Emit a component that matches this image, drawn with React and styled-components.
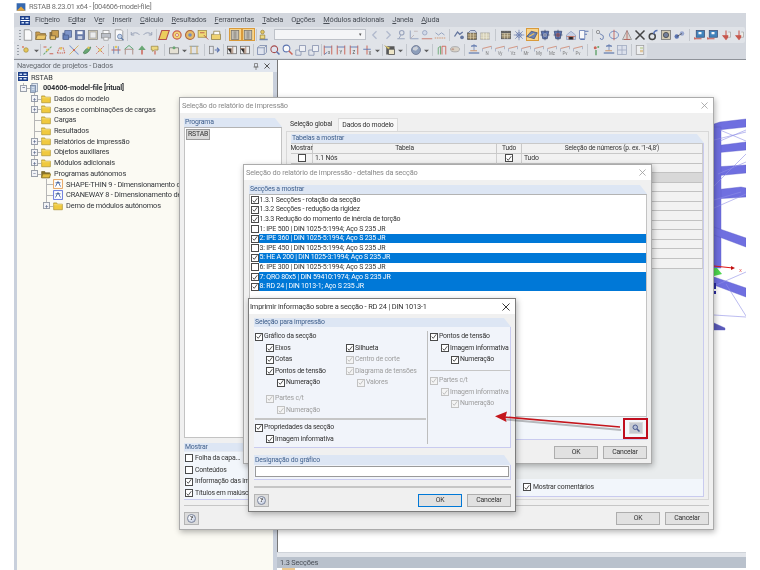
import React from "react";
import styled, { createGlobalStyle, css } from "styled-components";

const Global = createGlobalStyle`
  html, body { margin: 0; padding: 0; background: #fff; }
  #root { width: 760px; height: 570px; overflow: hidden; }
  * { box-sizing: border-box; }
`;

const small = css`
  font-size: 6.9px;
  letter-spacing: -0.18px;
`;

const Screen = styled.div`
  position: relative;
  width: 760px;
  height: 570px;
  overflow: hidden;
  background: #fff;
  font: 7.4px/1 Roboto, "Liberation Sans", sans-serif;
  letter-spacing: -0.18px;
  color: #333;
  filter: blur(0.35px);
`;
const AppTitle = styled.div`
  height: 13px;
  padding-left: 16px;
  display: flex;
  align-items: center;
  gap: 3px;
  color: #707070;
  letter-spacing: -0.25px;
`;
const Frame = styled.div`
  margin: 0 14px 0 14px;
  height: 557px;
  display: flex;
  flex-direction: column;
`;
const Chrome = styled.div`
  height: 47px;
  background: #d3d7de;
  border-bottom: 1px solid #8e9299;
  flex: none;
`;
const MenuBar = styled.div`
  height: 14px;
  padding-left: 6px;
  display: flex;
  align-items: center;
  gap: 8.1px;
  color: #4a4f57;
`;
const MenuLogo = styled.span`
  display: flex;
  margin-right: -3px;
`;
const ToolRow = styled.div`
  height: 15.5px;
  width: ${(p) => p.$w}px;
  padding-left: ${(p) => p.$pad}px;
  display: flex;
  align-items: center;
  background: #e0e3e8;
  border-radius: 2px;
  &::before {
    content: "";
    width: 2px;
    height: 10px;
    flex: none;
    margin-left: -3px;
    margin-right: 1px;
    background: repeating-linear-gradient(#9aa0a8 0 1px, transparent 1px 3px);
  }
`;
const Tool = styled.span`
  width: ${(p) => (p.$caret ? 7 : 13)}px;
  height: 13px;
  flex: none;
  display: flex;
  align-items: center;
  justify-content: center;
  svg {
    opacity: 0.82;
  }
  ${(p) =>
    p.$on &&
    css`
      background: #f8d48a;
      box-shadow: inset 0 0 0 1px #d99a3a;
    `}
`;
const Sep = styled.span`
  width: ${(p) => p.$w}px;
  height: 12px;
  flex: none;
  background: linear-gradient(#c3c7cd, #c3c7cd) center / 1px 100% no-repeat;
`;
const Combo = styled.span`
  width: ${(p) => p.$w}px;
  height: 11px;
  flex: none;
  margin: 0 3px 0 3px;
  background: #f4f5f7;
  border: 1px solid #bdc1c8;
  display: flex;
  align-items: center;
  justify-content: flex-end;
  padding-right: 3px;
  font-size: 5px;
  color: #555;
`;
const Main = styled.div`
  flex: 1;
  min-height: 0;
  display: flex;
`;
const Navigator = styled.div`
  width: 263px;
  flex: none;
  display: flex;
  flex-direction: column;
  background: #c9d0dc;
  padding: 0 4px 0 3px;
`;
const NavHead = styled.div`
  height: 12px;
  margin-left: -3px;
  margin-right: -4px;
  padding: 0 7px 0 3px;
  background: #e1e6ee;
  display: flex;
  align-items: center;
  justify-content: space-between;
  color: #666a70;
`;
const NavBtns = styled.span`
  display: flex;
  align-items: center;
  gap: 5px;
`;
const Tree = styled.div`
  flex: 1;
  background: #fbfaf3;
`;
const Node = styled.div`
  height: 10.7px;
  padding-left: ${(p) => p.$in}px;
  display: flex;
  align-items: center;
  font-weight: ${(p) => (p.$bold ? 700 : 400)};
  color: #33363b;
  white-space: nowrap;
  overflow: hidden;
`;
const Twig = styled.span`
  position: relative;
  width: 9px;
  height: 100%;
  flex: none;
  display: flex;
  align-items: center;
  justify-content: center;
  &::before {
    content: "";
    position: absolute;
    left: 4px;
    top: 0;
    bottom: ${(p) => (p.$last ? "50%" : 0)};
    border-left: 1px solid #b6b6b6;
  }
  &::after {
    content: "";
    position: absolute;
    left: 4px;
    right: -2px;
    top: 50%;
    border-top: 1px solid #b6b6b6;
  }
`;
const Expander = styled.span`
  position: relative;
  z-index: 1;
  width: 7px;
  height: 7px;
  border: 1px solid #9aa0aa;
  background: #f2f3f6;
  display: flex;
  align-items: center;
  justify-content: center;
  font-size: 6px;
  line-height: 1;
  color: #4a5a80;
`;
const NodeIcon = styled.span`
  width: 10px;
  height: 10px;
  flex: none;
  display: flex;
  margin: 0 3px 0 ${(p) => p.$l ?? 0}px;
`;
const Work = styled.div`
  flex: 1;
  min-width: 0;
  display: flex;
  flex-direction: column;
`;
const Canvas = styled.div`
  flex: 1;
  min-height: 0;
  background: #fff;
  border-left: 1px solid #777;
  svg {
    display: block;
    width: 100%;
    height: 100%;
  }
`;
const Gutter = styled.div`
  height: 5px;
  flex: none;
  background: #e2e5ea;
  border-top: 1px solid #d0d4da;
`;
const SectionBar = styled.div`
  height: 11px;
  flex: none;
  padding-left: 3px;
  background: #b9c1cc;
  display: flex;
  align-items: center;
  color: #4a4f57;
`;
const BarEdge = styled.div`
  height: 2px;
  flex: none;
  padding-left: 5px;
  display: flex;
`;
const TabStub = styled.span`
  width: 13px;
  background: #edc98f;
`;

/* dialogs: windows on the desktop */
const Dialog = styled.div`
  position: absolute;
  left: ${(p) => p.$x}px;
  top: ${(p) => p.$y}px;
  width: ${(p) => p.$w}px;
  height: ${(p) => p.$h}px;
  background: #f0f0f0;
  border: 1px solid ${(p) => (p.$focus ? "#7c7c7c" : "#ababab")};
  box-shadow: 1px 2px 6px rgba(0, 0, 0, 0.3);
  display: flex;
  flex-direction: column;
`;
const DlgTitle = styled.div`
  height: 15px;
  flex: none;
  background: #fff;
  padding: 0 5px 0 ${(p) => (p.$focus ? 1 : 2)}px;
  display: flex;
  align-items: center;
  justify-content: space-between;
  color: ${(p) => (p.$focus ? "#333" : "#8a8a8a")};
`;
const CloseX = styled.span`
  display: flex;
  color: ${(p) => (p.$focus ? "#222" : "#9a9a9a")};
`;
const DlgBody = styled.div`
  flex: 1;
  min-height: 0;
  padding: ${(p) => p.$pad};
  display: flex;
  flex-direction: column;
`;
const Split = styled.div`
  flex: 1;
  min-height: 0;
  display: flex;
  gap: 4px;
`;
const Side = styled.div`
  width: 98px;
  flex: none;
  display: flex;
  flex-direction: column;
`;
const GroupHead = styled.div`
  ${small}
  height: ${(p) => p.$h || 9}px;
  flex: none;
  background: #dde6f4;
  clip-path: polygon(0 0, calc(100% - 7px) 0, 100% 100%, 0 100%);
  padding-left: 1px;
  display: flex;
  align-items: center;
  color: #3f5f8c;
`;
const WhiteList = styled.div`
  flex: 1;
  min-height: 0;
  background: #fff;
  border: 1px solid #c3c3c3;
  border-top-color: #b3b3b3;
  padding: ${(p) => p.$pad || 0};
`;
const ProgItem = styled.span`
  ${small}
  display: inline-block;
  padding: 1px;
  background: #d9d9d9;
  border: 1px solid #9a9a9a;
`;
const Options = styled.div`
  ${small}
  height: 48px;
  flex: none;
  background: #f2f6fb;
  border-bottom: 1px solid #c9cbef;
  padding-top: 1px;
`;
const OptionRow = styled.div`
  height: 11.7px;
  padding-left: 1px;
  display: flex;
  align-items: center;
  gap: 2px;
  white-space: nowrap;
`;
const SideGap = styled.div`
  height: ${(p) => p.$h || 5}px;
  flex: none;
`;
const Right = styled.div`
  flex: 1;
  min-width: 0;
  display: flex;
  flex-direction: column;
`;
const Tabs = styled.div`
  ${small}
  height: 13px;
  flex: none;
  display: flex;
  padding-left: 2px;
`;
const Tab = styled.span`
  padding: 0 ${(p) => (p.$on ? 3 : 2)}px;
  height: 13px;
  display: flex;
  align-items: center;
  background: ${(p) => (p.$on ? "#f8f8f8" : "transparent")};
  border: ${(p) => (p.$on ? "1px solid #dcdcdc" : "none")};
  border-bottom: none;
  margin-left: ${(p) => (p.$on ? 4 : 0)}px;
`;
const Pane = styled.div`
  flex: 1;
  min-height: 0;
  border: 1px solid #d8d8d8;
  padding: 2px 4px 2px 4px;
  display: flex;
  flex-direction: column;
`;
const TableArea = styled.div`
  flex: 1;
  min-height: 0;
  background: #e9eced;
  border-right: 1px solid #c9cbef;
`;
const Grid = styled.div`
  display: grid;
  grid-template-columns: 22px 184px 25px 1fr;
`;
const Th = styled.span`
  height: 11px;
  background: #f1f1f1;
  border: 1px solid #c9c9c9;
  border-left: none;
  display: flex;
  align-items: center;
  justify-content: center;
  font-size: 6.6px;
  letter-spacing: -0.15px;
`;
const Td = styled.span`
  height: 9.55px;
  background: ${(p) => (p.$hi ? "#d8d8d8" : "#f2f2f2")};
  border-bottom: 1px solid #c2c2c2;
  border-right: 1px solid #cfcfcf;
  display: flex;
  align-items: center;
  justify-content: ${(p) => (p.$c ? "center" : "flex-start")};
  padding-left: ${(p) => (p.$c ? 0 : 2)}px;
  ${small}
`;
const Strip = styled.div`
  ${small}
  height: ${(p) => p.$h}px;
  flex: none;
  background: #f2f6fb;
  border-bottom: 1px solid #c9cbef;
  border-right: 1px solid #c9cbef;
  padding-left: ${(p) => p.$pad || 0}px;
  display: flex;
  align-items: center;
  justify-content: ${(p) => (p.$end ? "flex-end" : "flex-start")};
  gap: 2px;
`;
const Rule = styled.div`
  height: 1.5px;
  flex: none;
  background: #c6c6c6;
  margin: ${(p) => p.$m};
`;
const Footer = styled.div`
  height: 13px;
  flex: none;
  display: flex;
  align-items: center;
  gap: 5px;
  margin-top: ${(p) => p.$top || 0}px;
`;
const Push = styled.span`
  flex: 1;
`;
const Btn = styled.span`
  ${small}
  width: 44px;
  height: 13px;
  flex: none;
  background: #e1e1e1;
  border: 1px solid ${(p) => (p.$def ? "#0078d7" : "#adadad")};
  display: flex;
  align-items: center;
  justify-content: center;
`;
const HelpBtn = styled.span`
  width: 15px;
  height: 13px;
  flex: none;
  background: #dcdcdc;
  border: 1px solid #b4b4b4;
  display: flex;
  align-items: center;
  justify-content: center;
`;
const HelpDot = styled.span`
  width: 9px;
  height: 9px;
  border-radius: 50%;
  background: radial-gradient(circle at 30% 30%, #fff, #b9c4dc);
  border: 1px solid #7d869c;
  display: flex;
  align-items: center;
  justify-content: center;
  font: 700 7px/1 "Liberation Serif", serif;
  color: #222;
`;
const SecRow = styled.div`
  font-size: 7px;
  height: 9.6px;
  display: flex;
  align-items: center;
  white-space: nowrap;
  padding-left: 1px;
`;
const SecText = styled.span`
  flex: 1;
  height: 100%;
  display: flex;
  align-items: center;
  padding-left: 0.5px;
  background: ${(p) => (p.$sel ? "#0078d7" : "transparent")};
  color: ${(p) => (p.$sel ? "#fff" : "inherit")};
`;
const Box = styled.span`
  width: 8px;
  height: 8px;
  flex: none;
  background: ${(p) => (p.$muted ? "#f4f4f4" : "#fff")};
  border: 1px solid ${(p) => (p.$muted ? "#c2c2c2" : "#4a4a4a")};
  display: flex;
  align-items: center;
  justify-content: center;
`;
const MagnifyFrame = styled.span`
  width: 25px;
  height: 21px;
  border: 2px solid #c00d1e;
  margin-right: -2px;
  display: flex;
  align-items: center;
  justify-content: center;
`;
const MagnifyBtn = styled.span`
  width: 14px;
  height: 12px;
  background: #c6cad2;
  border: 1px solid #dadada;
  display: flex;
  align-items: center;
  justify-content: center;
`;
const SelBox = styled.div`
  height: 121px;
  flex: none;
  background: #f1f4fa;
  border: 1px solid #c9cbef;
  border-width: 0 1px 1px 0;
  display: flex;
  padding-top: 4px;
`;
const ColA = styled.div`
  width: 172px;
  flex: none;
  padding-left: 1px;
`;
const ColB = styled.div`
  flex: 1;
  padding-left: 2px;
  border-left: 1px solid #bdbdbd;
  margin: 0 0 3px 1px;
`;
const Twin = styled.div`
  display: flex;
`;
const TwinCol = styled.div`
  width: ${(p) => p.$w}px;
  flex: none;
`;
const CheckLine = styled.div`
  ${small}
  height: 11.5px;
  padding-left: ${(p) => p.$in || 0}px;
  margin-top: ${(p) => p.$mt || 0}px;
  display: flex;
  align-items: center;
  gap: 1px;
  white-space: nowrap;
  color: ${(p) => (p.$muted ? "#9e9e9e" : "inherit")};
`;
const Designation = styled.div`
  height: 15px;
  flex: none;
  background: #f1f4fa;
  border-bottom: 1px solid #c9cbef;
  border-right: 1px solid #c9cbef;
  padding: 1px 1px 2px 1px;
`;
const TextBox = styled.div`
  height: 100%;
  background: #fff;
  border: 1px solid #9a9a9a;
`;
const Overlay = styled.svg`
  position: absolute;
  left: 0;
  top: 0;
  width: 760px;
  height: 570px;
  pointer-events: none;
`;

/* ---------- icon glyphs (16 unit box) ---------- */
const G = {
  doc: <path d="M3 1h7l3 3v11H3z" fill="#fff" stroke="#6c6c6c" />,
  open: (<><path d="M1 4h5l1 2h7v8H1z" fill="#c98f2a" stroke="#6f521a" /><path d="M3 8h12l-2 6H1z" fill="#f0c14e" stroke="#6f521a" /></>),
  keys: (<><path d="M2 4h9v9H2z" fill="#7a5a20" /><path d="M5 2h9v9H5z" fill="#c4912f" stroke="#5e4414" /><path d="M3 9h7v5H3z" fill="#e9b84b" stroke="#5e4414" /></>),
  blues: (<><path d="M2 5h9v9H2z" fill="#3d568f" /><path d="M5 2h9v9H5z" fill="#6a86c4" stroke="#2f4478" /><path d="M3 8h7v6H3z" fill="#4e6fb4" stroke="#2f4478" /></>),
  save: (<><rect x="2" y="2" width="12" height="12" fill="#51679f" stroke="#39497a" /><rect x="4.5" y="3" width="7" height="4" fill="#fff" /><rect x="5" y="9.5" width="6" height="4" fill="#c4cde0" /></>),
  tile: (<><rect x="2" y="2" width="12" height="12" fill="#d4c9a8" stroke="#777" /><rect x="4" y="4" width="8" height="8" fill="#eee" stroke="#999" /></>),
  printer: (<><rect x="4" y="2" width="8" height="5" fill="#fff" stroke="#888" /><rect x="2" y="6" width="12" height="6" fill="#b5b9c2" stroke="#777" /><path d="M5 11h6v4H5z" fill="#fff" stroke="#888" /></>),
  preview: (<><path d="M3 1h8l2 2v12H3z" fill="#fff" stroke="#7a7a7a" /><circle cx="9" cy="10" r="3" fill="#bcd0ea" stroke="#3f5f96" /><path d="M11 12l3 3" stroke="#3f5f96" strokeWidth="1.5" /></>),
  undo: <path d="M3 8a6 5 0 0 1 11 0M3 4v4h4" fill="none" stroke="#8a95ad" strokeWidth="1.3" />,
  redo: <path d="M13 8a6 5 0 0 0-11 0M13 4v4H9" fill="none" stroke="#8a95ad" strokeWidth="1.3" />,
  para: <path d="M5 2h10l-4 12H1z" fill="#efc93e" stroke="#a8332a" strokeWidth="1.4" />,
  target: (<><circle cx="8" cy="8" r="5.5" fill="#f6d65a" stroke="#c2402c" strokeWidth="1.6" /><circle cx="8" cy="8" r="2" fill="#fff" stroke="#c2402c" /></>),
  target2: (<><circle cx="8" cy="8" r="6" fill="#e7b04a" stroke="#a04b1e" strokeWidth="1.4" /><circle cx="8" cy="8" r="2.4" fill="#5977b5" /></>),
  note: (<><rect x="1.5" y="2" width="11" height="9" fill="#f3d75c" stroke="#8f7420" /><path d="M9 8l6 6M4 5h6" stroke="#b13b2a" strokeWidth="1.2" /></>),
  flag: (<><path d="M2 7h12v7H2z" fill="#f3cf56" stroke="#7a6420" /><path d="M5 7V3h8v4" fill="#fff" stroke="#7a6420" /></>),
  panel: (<><rect x="3" y="2" width="10" height="12" fill="#b8bcc3" stroke="#5a5d63" /><rect x="6" y="3" width="4" height="10" fill="#8f9298" /></>),
  person: (<><circle cx="6" cy="4" r="2.4" fill="#e8c240" stroke="#8a6f1b" /><path d="M2 13h11v2H2z" fill="#5b76a8" /><path d="M3 8h6v5H3z" fill="#f2d76a" stroke="#8a6f1b" /></>),
  left: <path d="M10 3L5 8l5 5" fill="none" stroke="#a6b0c6" strokeWidth="1.7" />,
  right: <path d="M6 3l5 5-5 5" fill="none" stroke="#a6b0c6" strokeWidth="1.7" />,
  pin: (<><circle cx="9" cy="5" r="3" fill="none" stroke="#8c98b4" strokeWidth="1.5" /><path d="M3 13h10M8 8l-3 5" stroke="#8c98b4" strokeWidth="1.3" /></>),
  xyz: (<><path d="M3 2v11h11" fill="none" stroke="#7d8eb2" strokeWidth="1.2" /><path d="M3 13l5-5M8 3h5" stroke="#b3a0a0" strokeWidth="1" /></>),
  link: (<><circle cx="5" cy="5" r="3" fill="#cfd7e8" stroke="#7d8eb2" /><path d="M1 13h14" stroke="#c35c4b" strokeWidth="1.2" /></>),
  dash: (<><path d="M2 5l4 3 4-3 4 3" fill="none" stroke="#7d8eb2" strokeWidth="1.2" /><path d="M1 12h14" stroke="#d08a5d" strokeWidth="1.4" strokeDasharray="2 1" /></>),
  gear: (<><path d="M2 10l4-6 3 3 4-3" fill="none" stroke="#4a5f8f" strokeWidth="1.8" /><circle cx="12" cy="11" r="2.5" fill="#4a5f8f" /></>),
  bars: (<><path d="M2 5h12v9H2z" fill="#7f6a40" stroke="#3a3a3a" /><path d="M2 8h12M2 11h12M6 5v9M10 5v9" stroke="#e4d4a8" strokeWidth=".8" /><path d="M3 5l3-3h6l2 3" fill="#c9d2e4" stroke="#3d4f7d" /></>),
  barsLt: (<><path d="M2 5h12v9H2z" fill="#cfc9a8" stroke="#a9a9a9" /><path d="M2 8h12M2 11h12M6 5v9M10 5v9" stroke="#f3efdc" strokeWidth=".8" /></>),
  table: (<><rect x="2" y="3" width="12" height="10" fill="#8b7a52" stroke="#333" /><path d="M2 6h12M2 9h12M6 3v10M10 3v10" stroke="#dfd2ac" strokeWidth=".8" /><rect x="2" y="3" width="12" height="2.5" fill="#444" /></>),
  burst: (<><circle cx="8" cy="8" r="3" fill="#dbe2f2" stroke="#465e9b" /><path d="M8 1v14M1 8h14M3 3l10 10M13 3L3 13" stroke="#465e9b" strokeWidth=".9" /></>),
  model: (<><path d="M1 10l6-7 8 2-4 8z" fill="#4a6fc0" stroke="#1f3570" /><path d="M4 10l7-4" stroke="#f0c14e" strokeWidth="1.4" /></>),
  model2: (<><path d="M3 3h10l-2 10H5z" fill="#3e5ba3" stroke="#182a5c" /><circle cx="8" cy="8" r="2.4" fill="#fff" /><path d="M8 1v14M2 8h12" stroke="#182a5c" /></>),
  model3: (<><path d="M3 3h10l-2 10H5z" fill="#3e5ba3" stroke="#182a5c" /><circle cx="8" cy="8" r="2.6" fill="#c74a3a" /><path d="M8 1v14M2 8h12" stroke="#182a5c" /></>),
  roof: (<><path d="M2 14V8l6-5 6 5v6z" fill="#c0cbe2" stroke="#7c8fb8" /><path d="M5 14v-4h6v4M2 10h12" stroke="#b95b48" /></>),
  page2: (<><path d="M2 2h7v11H2z" fill="#fff" stroke="#3e5ba3" /><path d="M9 3h5M9 7h3M3 14h6" stroke="#3e5ba3" strokeWidth="1.3" /></>),
  hook: (<><circle cx="4" cy="4" r="2.2" fill="none" stroke="#6a6a6a" /><path d="M6 6l5 3v3a2 2 0 0 1-4 0" fill="none" stroke="#4a63a0" strokeWidth="1.2" /></>),
  ring: (<><ellipse cx="8" cy="8" rx="6" ry="5" fill="none" stroke="#5576b8" strokeWidth="1.2" /><path d="M8 1v14" stroke="#c2473c" strokeWidth="1.2" /></>),
  tri: (<><path d="M8 2l6 12H2z" fill="#d9d4cf" stroke="#7a7a7a" /><path d="M8 2v12" stroke="#b2392c" /><path d="M4 14h8" stroke="#b2392c" /></>),
  cross: <path d="M2 2l12 12M14 2L2 14" stroke="#222" strokeWidth="2" />,
  rot: (<><circle cx="7" cy="10" r="4" fill="none" stroke="#222" strokeWidth="2" /><path d="M9 7c0-3 2-5 5-5" fill="none" stroke="#3c5ca8" strokeWidth="2" /></>),
  cam: (<><rect x="2" y="2" width="12" height="12" fill="#cfc4a6" stroke="#555" /><circle cx="8" cy="8" r="3.5" fill="#5c6a8a" stroke="#222" /></>),
  nodes: (<><circle cx="5" cy="10" r="3" fill="#3f5ea8" /><circle cx="12" cy="6" r="3" fill="#8a9ccb" /><path d="M5 10l7-4" stroke="#222" /></>),
  screen: (<><rect x="3" y="2" width="11" height="9" fill="#1f6fb3" stroke="#1b2f5e" /><rect x="6" y="4" width="4" height="3" fill="#fff" /><path d="M1 13h9M1 11v3" stroke="#c2392c" strokeWidth="1.6" /></>),
  pdf: (<><path d="M8 2v7M4 9h8l-4 5z" fill="#c2392c" stroke="#c2392c" strokeWidth="1.4" /><path d="M11 4h3v7h-3" fill="#f2efe5" stroke="#999" /></>),
  dot: (<><circle cx="8" cy="8" r="3" fill="#e6c23b" stroke="#9a7d1e" /><circle cx="4" cy="4" r="1.2" fill="#d95c3a" /></>),
  lineA: (<><path d="M2 14L13 3" stroke="#4f9a5a" strokeWidth="1.4" strokeDasharray="3 1" /><path d="M2 4h4M10 13h5" stroke="#c94a38" strokeWidth="1.4" /><circle cx="7" cy="8" r="1.6" fill="#e6c23b" /></>),
  lineB: (<><path d="M3 12h10M3 12l3-7h5l2 7" fill="none" stroke="#c94a38" strokeWidth="1.3" strokeDasharray="2 1" /><circle cx="8" cy="6" r="1.6" fill="#e6c23b" /></>),
  lineC: (<><path d="M2 14L14 2" stroke="#d1a13a" strokeWidth="1.2" /><path d="M2 2l12 12" stroke="#6d8bc4" strokeWidth="1.4" /><circle cx="8" cy="8" r="1.5" fill="#c94a38" /></>),
  leaf: (<><path d="M3 12c2-5 6-7 10-8-1 5-4 8-8 9z" fill="#4f9a5a" stroke="#2c6a36" /><circle cx="10" cy="5" r="1.6" fill="#e6c23b" /></>),
  lineD: (<><path d="M3 3l10 10M13 3L3 13" stroke="#c94a38" strokeWidth="1.2" strokeDasharray="2 1" /><circle cx="8" cy="8" r="2" fill="#e6c23b" /></>),
  push: (<><path d="M2 8h12" stroke="#c94a38" strokeWidth="1.4" /><path d="M5 3v10M11 3v10" stroke="#546fa8" strokeWidth="1.2" /><circle cx="8" cy="4" r="1.6" fill="#e6c23b" /></>),
  house: (<><path d="M3 14V7h10v7" fill="#e4e6ec" stroke="#8d5b4b" /><path d="M2 7l6-5 6 5" fill="none" stroke="#3f9a5a" strokeWidth="1.3" /></>),
  tree: (<><path d="M8 2l5 6H3z" fill="#4f9a5a" /><path d="M8 8v6" stroke="#c94a38" strokeWidth="2" /></>),
  quest: (<><path d="M3 3h9v5H7l-2 2V8H3z" fill="#f0d86a" stroke="#8a7420" /><path d="M8 9v5" stroke="#c94a38" strokeWidth="1.6" /></>),
  cable: (<><path d="M2 5h12v8H2z" fill="#e5e0cf" stroke="#555" /><circle cx="8" cy="5" r="2" fill="#4f9a5a" /></>),
  fence: (<><path d="M2 3h12M2 13h12" stroke="#7d8a8a" strokeWidth="1.4" /><path d="M4 3v10M12 3v10" stroke="#c99a3a" strokeWidth="1.4" /></>),
  flow: (<><rect x="2" y="3" width="5" height="10" fill="#e4e6ec" stroke="#666" /><path d="M9 8h6M12 5l3 3-3 3" fill="none" stroke="#3e5ba3" strokeWidth="1.5" /></>),
  frame: (<><rect x="2" y="3" width="12" height="10" fill="#f0f0f0" stroke="#4c4c4c" /><path d="M2 6h5v7M9 3v10" stroke="#8a5a3a" /></>),
  search: (<><circle cx="7" cy="7" r="4.5" fill="#dfe4f0" stroke="#9a2a2a" strokeWidth="1.4" /><path d="M10 10l4 4" stroke="#3e5ba3" strokeWidth="2" /></>),
  search2: (<><circle cx="6" cy="6" r="4.5" fill="#fff" stroke="#3e5ba3" strokeWidth="1.4" /><path d="M9 9l5 5" stroke="#c94a38" strokeWidth="2" /></>),
  cube: (<><path d="M2 5h9v9H2z" fill="#dfe4f0" stroke="#5c6f99" /><path d="M2 5l3-3h9v9l-3 3M11 5l3-3" fill="none" stroke="#5c6f99" /></>),
  cube2: (<><path d="M1 8h7v7H1z" fill="#e3e6ed" stroke="#6b7a9c" /><path d="M6 2h8v8H6z" fill="#f0f2f7" stroke="#6b7a9c" /></>),
  rx: (<><path d="M3 2v12M13 2v12" stroke="#c94a38" strokeWidth="1.3" /><path d="M3 4h10M3 14l4-3" stroke="#3e5ba3" strokeWidth="1.2" /><text x="8" y="13" fontSize="6" fill="#333" fontFamily="Roboto">x</text></>),
  ry: (<><path d="M3 2v12M13 2v12" stroke="#c94a38" strokeWidth="1.3" /><path d="M3 4h10" stroke="#3e5ba3" strokeWidth="1.2" /><text x="6" y="13" fontSize="6" fill="#333" fontFamily="Roboto">Y</text></>),
  rz: (<><path d="M3 2v12M13 2v12" stroke="#c94a38" strokeWidth="1.3" /><path d="M3 4h10" stroke="#3e5ba3" strokeWidth="1.2" /><text x="6" y="13" fontSize="6" fill="#333" fontFamily="Roboto">Z</text></>),
  rm: (<><path d="M8 2v12" stroke="#c94a38" strokeWidth="1.3" /><path d="M3 7h10" stroke="#3e5ba3" strokeWidth="1.2" /><text x="10" y="14" fontSize="6" fill="#333" fontFamily="Roboto">X</text></>),
  checker: (<><rect x="3" y="3" width="11" height="11" fill="#3a3a3a" /><path d="M1 2l5 5 2-2" fill="#f3d75c" stroke="#8a7420" /><path d="M6 7h8v7H6z" fill="#f0e6c0" stroke="#333" /></>),
  globe: (<><circle cx="8" cy="8" r="6" fill="#7b8fb0" stroke="#4d5a78" /><path d="M4 5l5-2 2 3-3 3-4-1z" fill="#c8ccd4" /></>),
  arc: (<><path d="M3 14V5l3-2v11" fill="none" stroke="#4f9a5a" strokeWidth="1.2" /><path d="M8 14V3h5v11" fill="none" stroke="#c94a38" strokeWidth="1.2" /></>),
  roll: (<><ellipse cx="8" cy="7" rx="6" ry="3.5" fill="#d8cfc0" stroke="#8f8f8f" /><ellipse cx="5" cy="7" rx="2" ry="1.2" fill="#b9917e" /></>),
  beam: (<><path d="M8 1l4 2H4zM8 3v6" fill="#546fa8" stroke="#546fa8" /><path d="M1 12h14" stroke="#546fa8" strokeWidth="1.8" /><path d="M3 9h9" stroke="#c98a5a" strokeWidth="1.4" /></>),
  spark: (<><circle cx="7" cy="5" r="2" fill="#c94a38" /><circle cx="11" cy="4" r="1.4" fill="#4f9a5a" /><path d="M8 8v7" stroke="#4f9a5a" strokeWidth="2" /></>),
  grid2: (<><rect x="2" y="2" width="12" height="12" fill="#dbe0ec" stroke="#8e9ab5" /><path d="M8 2v12M2 8h12" stroke="#8e9ab5" /></>),
  sheet: (<><rect x="3" y="2" width="10" height="12" fill="#f1f1f1" stroke="#8d8d8d" /><path d="M8 4h4v3H8z" fill="#c8d8a8" /><path d="M8 8h4v3H8z" fill="#e1bf8a" /></>),
};
const Force = ({ t, stroke = "#d28a72" }) => (
  <>
    <path d="M2 6l12-3" stroke={stroke} strokeWidth="1.4" />
    <path d="M2 6v4M14 3v4" stroke="#8e9ab5" />
    <text x="8" y="14.5" fontSize="6" fill="#6a6a6a" fontFamily="Roboto" textAnchor="middle">{t}</text>
  </>
);
const Ico = ({ n, s = 12 }) => (
  <svg width={s} height={s} viewBox="0 0 16 16">{G[n]}</svg>
);
const Caret = () => (
  <svg width="5" height="5" viewBox="0 0 6 6"><path d="M0 2h6L3 5z" fill="#444" /></svg>
);
const Renders = ({ list }) =>
  list.map((it, i) => {
    if (typeof it === "number") return <Sep key={i} $w={it} />;
    if (it === "v") return <Tool key={i} $caret><Caret /></Tool>;
    if (Array.isArray(it) && it[0] === "F")
      return <Tool key={i}><svg width="12" height="12" viewBox="0 0 16 16"><Force t={it[1]} /></svg></Tool>;
    if (Array.isArray(it) && it[0] === "on")
      return <Tool key={i} $on><Ico n={it[1]} /></Tool>;
    if (Array.isArray(it) && it[0] === "combo") return <Combo key={i} $w={it[1]}>▾</Combo>;
    return <Tool key={i}><Ico n={it} /></Tool>;
  });

const row1 = ["doc","open","keys","blues","save","tile","printer","preview",3,"undo","redo",3,"para","target","target2","note","flag",6,["on","panel"],["on","panel"],3,"person",["combo",92],"left","right","pin","xyz","link","dash",6,"gear","bars","barsLt",8,"table","burst",["on","model"],"model2","model3","roof","page2",4,"hook","ring","tri","cross","rot","cam","nodes",8,"screen","screen","pdf","pdf"];
const row2 = ["dot","v",2,"lineA","lineB","lineC","leaf","lineD",3,"push","house","tree","quest",6,"cable","v","fence",7,"flow",5,"frame","frame",4,"cube","search","search2","cube2","cube2",1,"rx","ry","rz","rm","v",3,"checker","v",6,"globe","v",6,"arc","roll",6,"beam",["F","N"],["F","Vy"],["F","Vz"],["F","Mr"],["F","My"],["F","Mz"],["F","Pv"],["F","Pv"],5,"spark","beam","grid2",5,"sheet"];

const Logo = ({ w = 10, h = 9 }) => (
  <svg width={w} height={h} viewBox="0 0 20 18">
    <rect width="20" height="18" fill="#1d3f8a" />
    <rect x="1" y="8" width="18" height="2" fill="#fff" />
    <path d="M3 3h5v3H3zM11 3h6v3h-6zM3 12h5v3H3zM11 12h6v3h-6z" fill="#cfe0f7" />
  </svg>
);
const Folder = ({ open }) => (
  <svg width="10" height="10" viewBox="0 0 16 16">
    {open ? (
      <><path d="M1 4h5l1 2h7v8H1z" fill="#8a7428" stroke="#6c5a1c" /><path d="M3 8h13l-3 6H1z" fill="#e0bc3e" stroke="#8a7428" /></>
    ) : (
      <><path d="M1 3h5l1 2h8v9H1z" fill="#f0c93e" stroke="#a48a2a" /><path d="M1 6h14" stroke="#fbe68a" /></>
    )}
  </svg>
);
const ModelIco = () => (
  <svg width="10" height="10" viewBox="0 0 16 16">
    <rect x="3" y="1" width="9" height="13" fill="#dfe7f2" stroke="#6e7f9a" />
    <rect x="1" y="4" width="8" height="11" fill="#a7bad3" stroke="#5e708c" />
    <path d="M3 7h4M3 10h4" stroke="#fff" />
  </svg>
);
const AppIco = ({ c }) => (
  <svg width="10" height="10" viewBox="0 0 16 16">
    <rect x="1" y="1" width="14" height="14" fill="#fff" stroke={c} strokeWidth="1.4" />
    <path d="M4 12l4-8 4 8M4 6h8" fill="none" stroke="#44619c" strokeWidth="1.4" />
  </svg>
);
const CheckMark = ({ muted }) => (
  <svg width="7" height="7" viewBox="0 0 8 8">
    <path d="M1 4.2l2 2.2L7 1" fill="none" stroke={muted ? "#b5b5b5" : "#333"} strokeWidth="1.1" />
  </svg>
);
const Check = ({ on = true, muted }) => <Box $muted={muted}>{on && <CheckMark muted={muted} />}</Box>;

const Plus = () => <Expander>+</Expander>;
const Minus = () => <Expander>−</Expander>;
const Help = () => (
  <HelpBtn><HelpDot>?</HelpDot></HelpBtn>
);
const X = ({ focus }) => (
  <CloseX $focus={focus}>
    <svg width={focus ? 8 : 7} height={focus ? 8 : 7} viewBox="0 0 8 8"><path d="M0.5 0.5l7 7M7.5 0.5l-7 7" stroke="currentColor" strokeWidth="0.9" /></svg>
  </CloseX>
);

const menus = [
  ["Fic", "h", "eiro"], ["E", "d", "itar"], ["V", "e", "r"], ["", "I", "nserir"], ["", "C", "álculo"],
  ["", "R", "esultados"], ["", "F", "erramentas"], ["", "T", "abela"], ["O", "p", "ções"],
  ["", "M", "ódulos adicionais"], ["", "J", "anela"], ["", "A", "juda"],
];
const treeTop = [
  ["Dados do modelo", true], ["Casos e combinações de cargas", true], ["Cargas", false],
  ["Resultados", false], ["Relatórios de impressão", true], ["Objetos auxiliares", true], ["Módulos adicionais", true],
];
const sections = [
  ["1.3.1 Secções - rotação da secção", 1, 0],
  ["1.3.2 Secções - redução da rigidez", 1, 0],
  ["1.3.3 Redução do momento de inércia de torção", 1, 0],
  ["1: IPE 500 | DIN 1025-5:1994; Aço S 235 JR", 0, 0],
  ["2: IPE 360 | DIN 1025-5:1994; Aço S 235 JR", 1, 1],
  ["3: IPE 450 | DIN 1025-5:1994; Aço S 235 JR", 0, 0],
  ["5: HE A 200 | DIN 1025-3:1994; Aço S 235 JR", 1, 1],
  ["6: IPE 300 | DIN 1025-5:1994; Aço S 235 JR", 0, 0],
  ["7: QRO 80x5 | DIN 59410:1974; Aço S 235 JR", 1, 1],
  ["8: RD 24 | DIN 1013-1; Aço S 235 JR", 1, 1],
];
const Line = ({ in: indent, muted, mt, children }) => (
  <CheckLine $in={indent} $muted={muted} $mt={mt}>
    <Check muted={muted} />
    <span>{children}</span>
  </CheckLine>
);

const Model = () => (
  <svg viewBox="278 60 468 492" preserveAspectRatio="none">
    <g fill="#6f6fe0" stroke="#5c5cc8" strokeWidth="0.4">
      <path d="M714 124L720 122L746 119V127L718 130L714 130Z" />
      <path d="M714 146L746 142V150L714 153Z" />
      <path d="M714 167L746 165V173L714 176Z" />
      <path d="M714 190L741 187L746 188V197L714 199Z" />
      <path d="M714 127H721V268H714Z" />
      <path d="M714 227L746 238V247L714 235Z" />
      <path d="M714 277L746 288V297L714 285Z" />
      <path d="M714 323L725 328V330H714Z" fill="#5a5ab8" />
    </g>
    <g stroke="#8f8fe6" strokeWidth="0.6" fill="none">
      <path d="M720 130L746 141M720 141L746 130M714 140L746 132" />
      <path d="M714 186L746 154M718 174L746 162" />
      <path d="M714 208L746 194M714 200L741 192" />
      <path d="M714 286L746 272M726 284L746 316M714 315L746 317" />
    </g>
    <path d="M714 266L733 268" stroke="#e01818" strokeWidth="1.2" />
    <path d="M731 266l4 2-4 2z" fill="#c01010" />
    <text x="739" y="272" fontSize="6" fill="#e87070" fontFamily="Roboto">x</text>
    <path d="M714 268h3l5 6-8 2z" fill="#4fd84f" />
    <path d="M714 283h2v6h-2zM714 291h2v3h-2z" fill="#2a2aa0" />
  </svg>
);

export default function App() {
  return (
    <Screen>
      <Global />
      <AppTitle>
        <svg width="10" height="10" viewBox="0 0 16 16">
          <rect x="1" y="2" width="14" height="12" fill="#3568b0" />
          <path d="M1 14L8 7l7 7z" fill="#e2a33a" />
        </svg>
        RSTAB 8.23.01 x64 - [004606-model-file]
      </AppTitle>
      <Frame>
        <Chrome>
          <MenuBar>
            <MenuLogo><Logo /></MenuLogo>
            {menus.map(([a, u, b]) => (
              <span key={a + u + b}>{a}<u>{u}</u>{b}</span>
            ))}
          </MenuBar>
          <ToolRow $w={731} $pad={7.5}><Renders list={row1} /></ToolRow>
          <ToolRow $w={633} $pad={5.5}><Renders list={row2} /></ToolRow>
        </Chrome>
        <Main>
          <Navigator>
            <NavHead>
              <span>Navegador de projetos - Dados</span>
              <NavBtns>
                <svg width="6" height="7" viewBox="0 0 6 7"><path d="M1.5 .5h3v3.5h-3zM.5 4h5M3 4v3" fill="none" stroke="#777" strokeWidth=".8" /></svg>
                <svg width="6" height="6" viewBox="0 0 6 6"><path d="M.5 .5l5 5M5.5 .5l-5 5" stroke="#555" /></svg>
              </NavBtns>
            </NavHead>
            <Tree>
              <Node $in={1}><NodeIcon $l={0}><Logo /></NodeIcon>RSTAB</Node>
              <Node $in={2} $bold>
                <Twig $last><Minus /></Twig><NodeIcon $l={2}><ModelIco /></NodeIcon>004606-model-file [ritual]
              </Node>
              {treeTop.map(([t, exp]) => (
                <Node key={t} $in={13}>
                  <Twig>{exp && <Plus />}</Twig>
                  <NodeIcon $l={2}><Folder /></NodeIcon>{t}
                </Node>
              ))}
              <Node $in={13}>
                <Twig $last><Minus /></Twig>
                <NodeIcon $l={2}><Folder open /></NodeIcon>Programas autónomos
              </Node>
              <Node $in={25}><Twig /><NodeIcon $l={2}><AppIco c="#e39a4f" /></NodeIcon>SHAPE-THIN 9 - Dimensionamento de secções</Node>
              <Node $in={25}><Twig /><NodeIcon $l={2}><AppIco c="#5567d8" /></NodeIcon>CRANEWAY 8 - Dimensionamento de vigas</Node>
              <Node $in={25}><Twig $last><Plus /></Twig><NodeIcon $l={2}><Folder /></NodeIcon>Demo de módulos autónomos</Node>
            </Tree>
          </Navigator>
          <Work>
            <Canvas><Model /></Canvas>
            <Gutter />
            <SectionBar>1.3 Secções</SectionBar>
            <BarEdge><TabStub /></BarEdge>
          </Work>
        </Main>
      </Frame>

      <Dialog $x={179} $y={97} $w={535} $h={433}>
        <DlgTitle>Seleção do relatório de impressão<X /></DlgTitle>
        <DlgBody $pad="5px 4px 4px 4px">
          <Split>
            <Side>
              <GroupHead>Programa</GroupHead>
              <WhiteList $pad="1px"><ProgItem>RSTAB</ProgItem></WhiteList>
              <SideGap />
              <GroupHead>Mostrar</GroupHead>
              <Options>
                <OptionRow><Check on={false} />Folha da capa...</OptionRow>
                <OptionRow><Check on={false} />Conteúdos</OptionRow>
                <OptionRow><Check />Informação das imagens</OptionRow>
                <OptionRow><Check />Títulos em maiúsculas</OptionRow>
              </Options>
            </Side>
            <Right>
              <Tabs>
                <Tab>Seleção global</Tab>
                <Tab $on>Dados do modelo</Tab>
              </Tabs>
              <Pane>
                <GroupHead>Tabelas a mostrar</GroupHead>
                <TableArea>
                  <Grid>
                    <Th>Mostrar</Th><Th>Tabela</Th><Th>Tudo</Th><Th>Seleção de números (p. ex. '1-4,8')</Th>
                    <Td $c><Check on={false} /></Td><Td>1.1 Nós</Td><Td $c><Check /></Td><Td>Tudo</Td>
                    {Array.from({ length: 11 }).map((_, i) => (
                      <React.Fragment key={i}>
                        <Td $hi={i === 1} /><Td $hi={i === 1} /><Td $hi={i === 1} /><Td $hi={i === 1} />
                      </React.Fragment>
                    ))}
                  </Grid>
                </TableArea>
                <Strip $h={18} $pad={232}><Check />Mostrar comentários</Strip>
              </Pane>
            </Right>
          </Split>
          <Rule $m="5px 0 6px 0" />
          <Footer>
            <Help /><Push /><Btn>OK</Btn><Btn>Cancelar</Btn>
          </Footer>
        </DlgBody>
      </Dialog>

      <Dialog $x={243} $y={164} $w={409} $h={300}>
        <DlgTitle>Seleção do relatório de impressão - detalhes da secção<X /></DlgTitle>
        <DlgBody $pad="5px 4px 4px 5px">
          <GroupHead>Secções a mostrar</GroupHead>
          <WhiteList $pad="0.5px 0 0 0">
            {sections.map(([t, c, s]) => (
              <SecRow key={t}>
                <Check on={!!c} />
                <SecText $sel={!!s}>{t}</SecText>
              </SecRow>
            ))}
          </WhiteList>
          <Strip $h={23} $end>
            <MagnifyFrame>
              <MagnifyBtn>
                <svg width="8" height="8" viewBox="0 0 16 16">
                  <circle cx="6.5" cy="6.5" r="4.5" fill="#b4bfd8" stroke="#4a5a90" strokeWidth="2" />
                  <path d="M10 10l5 5" stroke="#4a5a90" strokeWidth="3" />
                </svg>
              </MagnifyBtn>
            </MagnifyFrame>
          </Strip>
          <Footer $top={6}>
            <Push /><Btn>OK</Btn><Btn>Cancelar</Btn>
          </Footer>
        </DlgBody>
      </Dialog>

      <Dialog $x={248} $y={298} $w={268} $h={214} $focus>
        <DlgTitle $focus>Imprimir informação sobre a secção - RD 24 | DIN 1013-1<X focus /></DlgTitle>
        <DlgBody $pad="4px 4px 6px 5px">
          <GroupHead>Seleção para impressão</GroupHead>
          <SelBox>
            <ColA>
              <Line>Gráfico da secção</Line>
              <Twin>
                <TwinCol $w={91}>
                  <Line in={11}>Eixos</Line>
                  <Line in={11}>Cotas</Line>
                  <Line in={11}>Pontos de tensão</Line>
                  <Line in={22}>Numeração</Line>
                  <Line in={11} muted mt={4.5}>Partes c/t</Line>
                  <Line in={22} muted>Numeração</Line>
                </TwinCol>
                <TwinCol $w={80}>
                  <Line>Silhueta</Line>
                  <Line muted>Centro de corte</Line>
                  <Line muted>Diagrama de tensões</Line>
                  <Line in={11} muted>Valores</Line>
                </TwinCol>
              </Twin>
              <Rule $m="2px 0 2.5px 0" />
              <Line>Propriedades da secção</Line>
              <Line in={11}>Imagem informativa</Line>
            </ColA>
            <ColB>
              <Line>Pontos de tensão</Line>
              <Line in={11}>Imagem informativa</Line>
              <Line in={21}>Numeração</Line>
              <Rule $m="4px 0 4px 0" />
              <Line muted>Partes c/t</Line>
              <Line in={11} muted>Imagem informativa</Line>
              <Line in={21} muted>Numeração</Line>
            </ColB>
          </SelBox>
          <SideGap $h={7} />
          <GroupHead $h={10}>Designação do gráfico</GroupHead>
          <Designation><TextBox /></Designation>
          <Rule $m="6px 0 6px 0" />
          <Footer>
            <Help /><Push /><Btn $def>OK</Btn><Btn>Cancelar</Btn>
          </Footer>
        </DlgBody>
      </Dialog>

      <Overlay viewBox="0 0 760 570">
        <path d="M620 428L505 417.5" stroke="rgba(0,0,0,.25)" strokeWidth="2" transform="translate(1 2)" />
        <path d="M620 427L504 417" stroke="#c4161c" strokeWidth="1.6" />
        <path d="M495 416.3L507 411.5L505.5 417.2L506.5 422Z" fill="#c4161c" />
      </Overlay>
    </Screen>
  );
}
